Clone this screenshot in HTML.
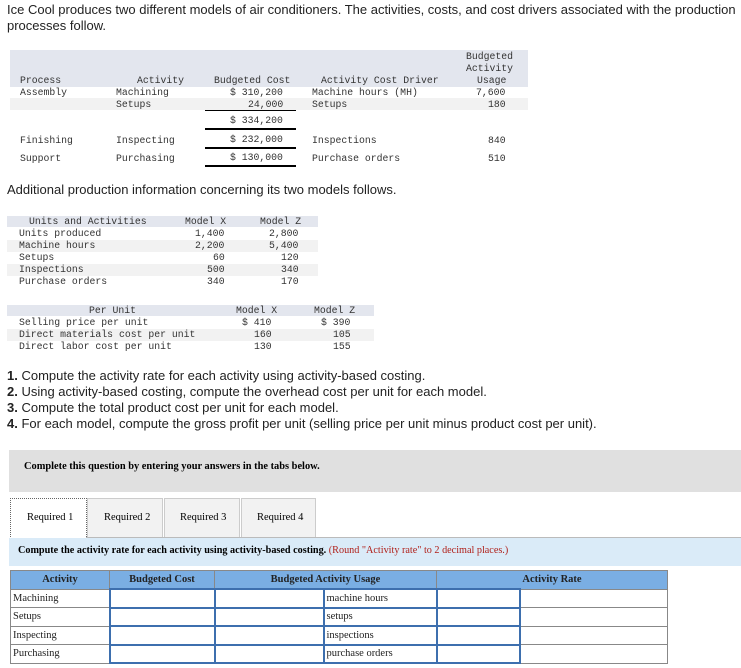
<!DOCTYPE html>
<html><head><style>
body{margin:0;width:741px;height:668px;background:#fff;position:relative;overflow:hidden;font-family:"Liberation Sans",Arial,sans-serif;color:#222}
.a{position:absolute;white-space:nowrap}
.m{font-family:"Liberation Mono",monospace;font-size:9.8px;color:#333}
.t{font-size:13px;letter-spacing:0}
.g{position:absolute;background:#e3e6ee}
.r{position:absolute;background:#f2f2f2}
.ln{position:absolute;background:#000;height:2px}
.s{font-family:"Liberation Serif",serif;font-size:10.5px;color:#000}
table.b{position:absolute;left:10px;top:570px;border-collapse:collapse;font-family:"Liberation Serif",serif;font-size:10.5px}
table.b td,table.b th{border:1px solid #888;padding:0 2px;height:16.5px}
table.b th{background:#7aaee3;font-weight:bold;height:17px}
.in{border:2px solid #3d6fae !important;background:#fff}
</style></head><body>
<div class="a t" style="left:7px;top:2px">Ice Cool produces two different models of air conditioners. The activities, costs, and cost drivers associated with the production</div>
<div class="a t" style="left:7px;top:18px">processes follow.</div>

<div class="g" style="left:10px;top:50px;width:518px;height:37px"></div>
<div class="r" style="left:10px;top:98px;width:518px;height:12px"></div>
<div class="a m" style="left:466px;top:51px">Budgeted</div>
<div class="a m" style="left:466px;top:63px">Activity</div>
<div class="a m" style="left:20px;top:75px">Process</div>
<div class="a m" style="left:137px;top:75px">Activity</div>
<div class="a m" style="left:214px;top:75px">Budgeted Cost</div>
<div class="a m" style="left:321px;top:75px">Activity Cost Driver</div>
<div class="a m" style="left:477px;top:75px">Usage</div>
<div class="a m" style="left:20px;top:87px">Assembly</div>
<div class="a m" style="left:116px;top:87px">Machining</div>
<div class="a m" style="left:230px;top:87px">$ 310,200</div>
<div class="a m" style="left:312px;top:87px">Machine hours (MH)</div>
<div class="a m" style="left:476px;top:87px">7,600</div>
<div class="a m" style="left:116px;top:99px">Setups</div>
<div class="a m" style="left:248px;top:99px">24,000</div>
<div class="a m" style="left:312px;top:99px">Setups</div>
<div class="a m" style="left:488px;top:99px">180</div>
<div class="ln" style="left:205px;top:110px;width:91px;height:1px"></div>
<div class="a m" style="left:230px;top:115px">$ 334,200</div>
<div class="ln" style="left:205px;top:128px;width:91px"></div>
<div class="a m" style="left:20px;top:135px">Finishing</div>
<div class="a m" style="left:116px;top:135px">Inspecting</div>
<div class="a m" style="left:230px;top:134px">$ 232,000</div>
<div class="a m" style="left:312px;top:135px">Inspections</div>
<div class="a m" style="left:488px;top:135px">840</div>
<div class="ln" style="left:205px;top:147px;width:91px"></div>
<div class="a m" style="left:20px;top:153px">Support</div>
<div class="a m" style="left:116px;top:153px">Purchasing</div>
<div class="a m" style="left:230px;top:152px">$ 130,000</div>
<div class="a m" style="left:312px;top:153px">Purchase orders</div>
<div class="a m" style="left:488px;top:153px">510</div>
<div class="ln" style="left:205px;top:165px;width:91px"></div>

<div class="a t" style="left:7px;top:182px">Additional production information concerning its two models follows.</div>

<div class="g" style="left:7px;top:216px;width:311px;height:11px"></div>
<div class="r" style="left:7px;top:240px;width:311px;height:12px"></div>
<div class="r" style="left:7px;top:264px;width:311px;height:12px"></div>
<div class="a m" style="left:29px;top:216px">Units and Activities</div>
<div class="a m" style="left:185px;top:216px">Model X</div>
<div class="a m" style="left:260px;top:216px">Model Z</div>
<div class="a m" style="left:19px;top:228px">Units produced</div>
<div class="a m" style="left:195px;top:228px">1,400</div><div class="a m" style="left:269px;top:228px">2,800</div>
<div class="a m" style="left:19px;top:240px">Machine hours</div>
<div class="a m" style="left:195px;top:240px">2,200</div><div class="a m" style="left:269px;top:240px">5,400</div>
<div class="a m" style="left:19px;top:252px">Setups</div>
<div class="a m" style="left:213px;top:252px">60</div><div class="a m" style="left:281px;top:252px">120</div>
<div class="a m" style="left:19px;top:264px">Inspections</div>
<div class="a m" style="left:207px;top:264px">500</div><div class="a m" style="left:281px;top:264px">340</div>
<div class="a m" style="left:19px;top:276px">Purchase orders</div>
<div class="a m" style="left:207px;top:276px">340</div><div class="a m" style="left:281px;top:276px">170</div>

<div class="g" style="left:7px;top:305px;width:367px;height:11px"></div>
<div class="r" style="left:7px;top:329px;width:367px;height:12px"></div>
<div class="a m" style="left:89px;top:305px">Per Unit</div>
<div class="a m" style="left:236px;top:305px">Model X</div>
<div class="a m" style="left:314px;top:305px">Model Z</div>
<div class="a m" style="left:19px;top:317px">Selling price per unit</div>
<div class="a m" style="left:242px;top:317px">$ 410</div><div class="a m" style="left:321px;top:317px">$ 390</div>
<div class="a m" style="left:19px;top:329px">Direct materials cost per unit</div>
<div class="a m" style="left:254px;top:329px">160</div><div class="a m" style="left:333px;top:329px">105</div>
<div class="a m" style="left:19px;top:341px">Direct labor cost per unit</div>
<div class="a m" style="left:254px;top:341px">130</div><div class="a m" style="left:333px;top:341px">155</div>

<div class="a t" style="left:7px;top:368px"><b>1.</b> Compute the activity rate for each activity using activity-based costing.</div>
<div class="a t" style="left:7px;top:384px"><b>2.</b> Using activity-based costing, compute the overhead cost per unit for each model.</div>
<div class="a t" style="left:7px;top:400px"><b>3.</b> Compute the total product cost per unit for each model.</div>
<div class="a t" style="left:7px;top:416px"><b>4.</b> For each model, compute the gross profit per unit (selling price per unit minus product cost per unit).</div>

<div style="position:absolute;left:9px;top:450px;width:732px;height:42px;background:#e0e0e0"></div>
<div class="a s" style="left:24px;top:461px;font-weight:bold;font-size:10.4px">Complete this question by entering your answers in the tabs below.</div>

<div style="position:absolute;left:10px;top:498px;width:75px;height:40px;background:#fff;border:1px dotted #666;border-bottom:none"></div>
<div style="position:absolute;left:87px;top:498px;width:74px;height:38px;background:#f2f2f2;border:1px solid #ccc"></div>
<div style="position:absolute;left:164px;top:498px;width:74px;height:38px;background:#f2f2f2;border:1px solid #ccc"></div>
<div style="position:absolute;left:241px;top:498px;width:73px;height:38px;background:#f2f2f2;border:1px solid #ccc"></div>
<div style="position:absolute;left:86px;top:537px;width:655px;height:1px;background:#bbb"></div>
<div class="a s" style="left:27px;top:512px">Required 1</div>
<div class="a s" style="left:104px;top:512px">Required 2</div>
<div class="a s" style="left:180px;top:512px">Required 3</div>
<div class="a s" style="left:257px;top:512px">Required 4</div>

<div style="position:absolute;left:9px;top:538px;width:732px;height:28px;background:#daebf8"></div>
<div class="a s" style="left:18px;top:545px;font-size:10.2px"><b>Compute the activity rate for each activity using activity-based costing.</b> <span style="color:#b0201a">(Round "Activity rate" to 2 decimal places.)</span></div>

<table class="b">
<tr><th style="width:94px">Activity</th><th style="width:100px">Budgeted Cost</th><th colspan="2" style="width:217px">Budgeted Activity Usage</th><th colspan="2" style="width:226px">Activity Rate</th></tr>
<tr><td>Machining</td><td class="in"></td><td class="in" style="width:103px"></td><td class="in">machine hours</td><td class="in" style="width:77px"></td><td></td></tr>
<tr><td>Setups</td><td class="in"></td><td class="in"></td><td class="in">setups</td><td class="in"></td><td></td></tr>
<tr><td>Inspecting</td><td class="in"></td><td class="in"></td><td class="in">inspections</td><td class="in"></td><td></td></tr>
<tr><td>Purchasing</td><td class="in"></td><td class="in"></td><td class="in">purchase orders</td><td class="in"></td><td></td></tr>
</table>
</body></html>
